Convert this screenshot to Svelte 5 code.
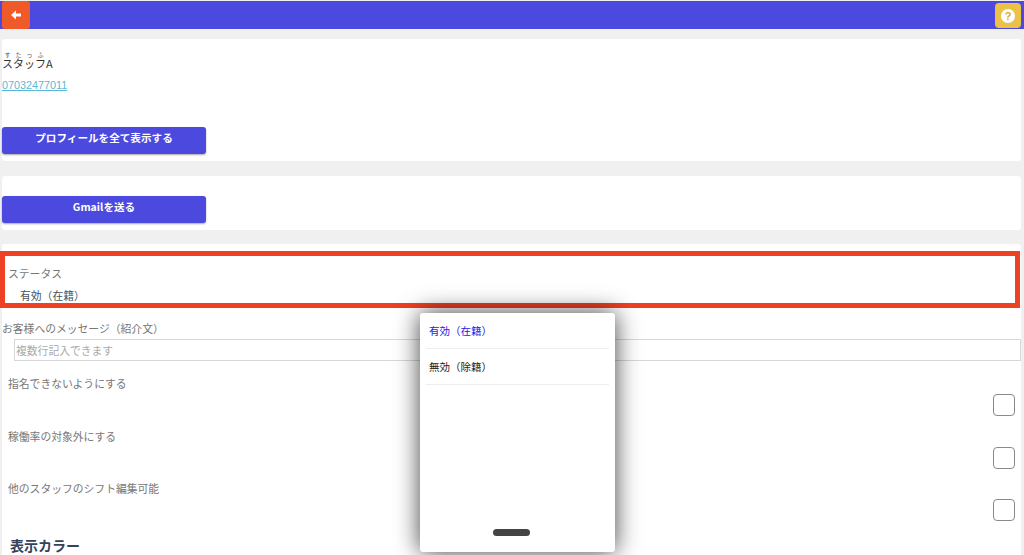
<script>
  const toggles = ['指名できないようにする', '稼働率の対象外にする', '他のスタッフのシフト編集可能']
  const options = [
    { label: '有効（在籍）', active: true },
    { label: '無効（除籍）', active: false }
  ]
</script>

<div class="page">
  <header class="topbar">
    <button class="icon-btn back" aria-label="戻る">
      <svg width="12" height="12" viewBox="0 0 12 12"><path d="M1 6 L6 1.5 V4.4 H11 V7.6 H6 V10.5 Z" fill="#fff" /></svg>
    </button>
    <button class="icon-btn help" aria-label="ヘルプ">
      <span class="help-mark">?</span>
    </button>
  </header>

  <section class="card profile">
    <div class="name"><ruby>スタッフ<rt>すたっふ</rt></ruby>A</div>
    <a class="tel" href="#top">07032477011</a>
    <button class="primary">プロフィールを全て表示する</button>
  </section>

  <section class="card mail">
    <button class="primary">Gmailを送る</button>
  </section>

  <section class="card form">
    <div class="status">
      <div class="label">ステータス</div>
      <div class="value">有効（在籍）</div>
    </div>

    <div class="message">
      <div class="label">お客様へのメッセージ（紹介文）</div>
      <div class="textarea">複数行記入できます</div>
    </div>

    <div class="toggles">
      {#each toggles as text}
        <div class="toggle">
          <div class="label">{text}</div>
          <span class="check"></span>
        </div>
      {/each}
    </div>

    <h2>表示カラー</h2>
  </section>

  <div class="sheet">
    {#each options as opt}
      <div class="option" class:active={opt.active}>{opt.label}</div>
    {/each}
    <span class="handle"></span>
  </div>
</div>

<style>
  :global(body) {
    margin: 0;
    background: #f0f0f0;
  }

  .page {
    position: relative;
    height: 555px;
    overflow: hidden;
    background: #f0f0f0;
    font-family: "Noto Sans CJK JP", "Noto Sans", sans-serif;
    color: #333;
  }

  .topbar {
    display: flex;
    justify-content: space-between;
    align-items: flex-start;
    height: 28px;
    margin-top: 1px;
    background: #4c4ade;
  }

  .icon-btn {
    border: none;
    padding: 0;
    display: flex;
    align-items: center;
    justify-content: center;
  }

  .back {
    width: 28px;
    height: 28px;
    margin-left: 2px;
    border-radius: 3px;
    background: #f05a28;
  }

  .help {
    width: 26px;
    height: 25px;
    margin: 2px 3px 0 0;
    border-radius: 4px;
    background: #ebc247;
  }

  .help-mark {
    width: 14px;
    height: 14px;
    border-radius: 50%;
    background: #fff;
    color: #d9a92c;
    font: 700 11px/14px "Liberation Sans", sans-serif;
    text-align: center;
  }

  .card {
    background: #fff;
    margin: 0 3px 0 2px;
    border-radius: 3px;
  }

  .profile {
    margin-top: 10px;
    height: 122px;
    padding-top: 12px;
    box-sizing: border-box;
  }

  .name {
    font-size: 11px;
    line-height: 17px;
    color: #333;
  }

  rt {
    font-size: 6px;
    line-height: 1;
    color: #555;
  }

  .tel {
    display: block;
    margin-top: 5px;
    font: 10.8px/16px "Liberation Sans", sans-serif;
    color: #5bb8d6;
  }

  .primary {
    display: block;
    width: 204px;
    height: 27px;
    border: none;
    border-radius: 3px;
    background: #4c4ade;
    box-shadow: 0 1px 2px rgba(0, 0, 0, 0.35);
    color: #fff;
    font: 700 10.6px/20px "Noto Sans CJK JP", "Noto Sans", sans-serif;
    padding: 0 0 5px;
  }

  .profile .primary {
    margin-top: 34px;
  }

  .mail {
    margin-top: 15px;
    height: 54px;
    padding-top: 20px;
    box-sizing: border-box;
  }

  .form {
    margin-top: 14px;
    height: 320px;
    padding-top: 7px;
    box-sizing: border-box;
  }

  .label {
    font-size: 10.8px;
    line-height: 16px;
    color: #777;
  }

  .status {
    height: 57px;
    box-sizing: border-box;
    margin: 0 1px 0 -2px;
    border: 5px solid #ee4023;
    padding: 9px 3px 0;
    background: #fff;
  }

  .value {
    margin-top: 6px;
    padding-left: 12px;
    font-size: 10.8px;
    line-height: 16px;
    color: #4a5160;
  }

  .message {
    margin-top: 12px;
  }

  .textarea {
    margin: 3px 0 0 12px;
    height: 20px;
    border: 1px solid #d8d8d8;
    padding-left: 1px;
    font-size: 10.8px;
    line-height: 20px;
    color: #aaa;
  }

  .toggles {
    margin-top: 14px;
  }

  .toggle {
    position: relative;
    height: 52.5px;
    padding-left: 6px;
    box-sizing: border-box;
  }

  .check {
    position: absolute;
    right: 6px;
    top: 19px;
    width: 20px;
    height: 20px;
    border: 1px solid #8a8a8a;
    border-radius: 4px;
  }

  h2 {
    margin: 2.5px 0 0 8px;
    font-size: 14px;
    line-height: 20px;
    font-weight: 700;
    color: #34425a;
  }

  .sheet {
    position: absolute;
    left: 420px;
    top: 313px;
    width: 195px;
    height: 239px;
    padding: 0 6px;
    box-sizing: border-box;
    background: #fff;
    border-radius: 3px;
    box-shadow: 0 0 24px rgba(0, 0, 0, 0.75);
  }

  .option {
    height: 35px;
    padding-left: 3px;
    border-bottom: 1px solid #eeeeee;
    font-size: 10.5px;
    line-height: 35px;
    color: #222;
  }

  .option.active {
    color: #2020f0;
  }

  .handle {
    position: absolute;
    left: 73px;
    bottom: 16px;
    width: 37px;
    height: 7px;
    border-radius: 4px;
    background: #444;
  }
</style>
